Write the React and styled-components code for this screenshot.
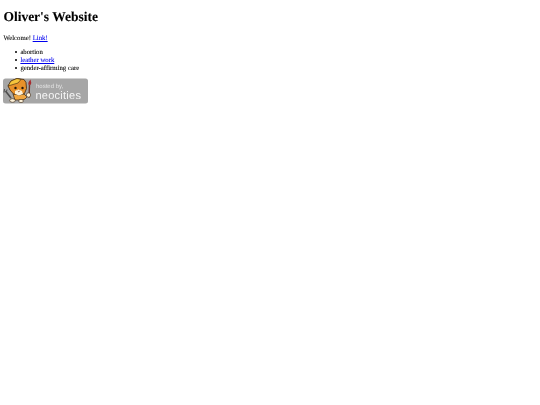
import styled, { createGlobalStyle } from 'styled-components';

const GlobalStyle = createGlobalStyle`
  html, body {
    background: #fff;
  }
  body {
    margin: 0;
    font-family: "Liberation Serif", "Times New Roman", serif;
    font-size: 6.75px;
    line-height: 8px;
    color: #000;
    text-rendering: geometricPrecision;
    -webkit-text-stroke: 0.08px currentColor;
  }
`;

const Page = styled.div`
  padding: 0.5px 3.375px 0;
  filter: blur(0.2px);
`;

const Title = styled.h1`
  font-size: 13.5px;
  line-height: 15.5px;
  font-weight: 700;
  margin: 8px 0 10.5px;
`;

const Intro = styled.p`
  margin: 0 0 6px;
`;

const Link = styled.a`
  color: #0000ee;
  text-decoration: underline;
`;

const List = styled.ul`
  margin: 0 0 5px;
  padding-left: 17px;
  list-style: none;
`;

const Item = styled.li`
  &::before {
    content: '';
    display: inline-block;
    width: 2.4px;
    height: 2.4px;
    margin-left: -5.4px;
    margin-right: 3px;
    border-radius: 50%;
    background: #000;
    vertical-align: 0.4px;
  }
`;

const BadgeLink = styled.a`
  display: block;
  width: 85px;
  height: 26px;
`;

const Badge = () => (
  <svg width="85" height="26" viewBox="0 0 85 26" xmlns="http://www.w3.org/2000/svg" role="img" aria-label="hosted by neocities">
    <rect x="0" y="0.500" width="85" height="25" rx="2.500" fill="#a6a6a6" />
    {/* wrench */}
    <path d="M2.500 13l5.500 7" stroke="#4e4e4e" strokeWidth="1.600" />
    <path d="M1 14.500l.5-3.500M4 11.500l-.5 2" fill="none" stroke="#4e4e4e" strokeWidth="1" />
    {/* body and arm */}
    <path d="M10 16l11 0 3 3-2 2-3 1-7 0z" fill="#f0a640" stroke="#3d2712" strokeWidth="0.700" />
    <path d="M10 21l-1 3M17 22l1 2" stroke="#3d2712" strokeWidth="1" />
    <ellipse cx="9.500" cy="22.500" rx="2.800" ry="1.800" fill="#fdf1d8" stroke="#3d2712" strokeWidth="0.600" />
    <ellipse cx="18" cy="23" rx="2.400" ry="1.600" fill="#fdf1d8" stroke="#3d2712" strokeWidth="0.600" />
    {/* cat head */}
    <path d="M5 8l3-5 6-2.500 7 1 2 3 .5 6-2 5-5 1.500-6-1-3.500-4z" fill="#e8912a" stroke="#3d2712" strokeWidth="0.800" />
    {/* hard hat */}
    <path d="M5 8l3-5 6-2.500 4 1-3 3.500-5 1.500z" fill="#f6c53c" stroke="#3d2712" strokeWidth="0.600" />
    {/* face */}
    <path d="M12 13l3.500-1.500 3.500 1.500 1 3-4 1.500-4-1.500z" fill="#fdf1d8" />
    <circle cx="12.500" cy="10" r="1.200" fill="#24170a" />
    <circle cx="19.500" cy="10" r="1.200" fill="#24170a" />
    <path d="M14.800 13l1 .8 1-.8" fill="none" stroke="#7a2d10" strokeWidth="0.700" />
    {/* brush and hand */}
    <path d="M26.500 6.500l-.5 13" stroke="#6e3a2c" strokeWidth="1.400" fill="none" />
    <path d="M27.500 1.500l.8 3.500-.8 2-2.300-.5.400-2.500z" fill="#a92a2e" />
    <circle cx="25.500" cy="17" r="2.200" fill="#fdf1d8" stroke="#3d2712" strokeWidth="0.600" />
    {/* caption */}
    <text x="33" y="10" fontFamily="'Liberation Sans', Arial, sans-serif" fontSize="6" strokeWidth="0" fill="#e4e4e4">hosted by,</text>
    <text x="32.500" y="21.400" fontFamily="'Liberation Sans', Arial, sans-serif" fontSize="11" letterSpacing="0.250" strokeWidth="0" fill="#f6f6f6">neocities</text>
  </svg>
);

export default function App() {
  return (
    <Page>
      <GlobalStyle />
      <Title>Oliver's Website</Title>
      <Intro>
        Welcome! <Link href="#">Link!</Link>
      </Intro>
      <List>
        <Item>abortion</Item>
        <Item><Link href="#">leather work</Link></Item>
        <Item>gender-affirming care</Item>
      </List>
      <BadgeLink href="#">
        <Badge />
      </BadgeLink>
    </Page>
  );
}
